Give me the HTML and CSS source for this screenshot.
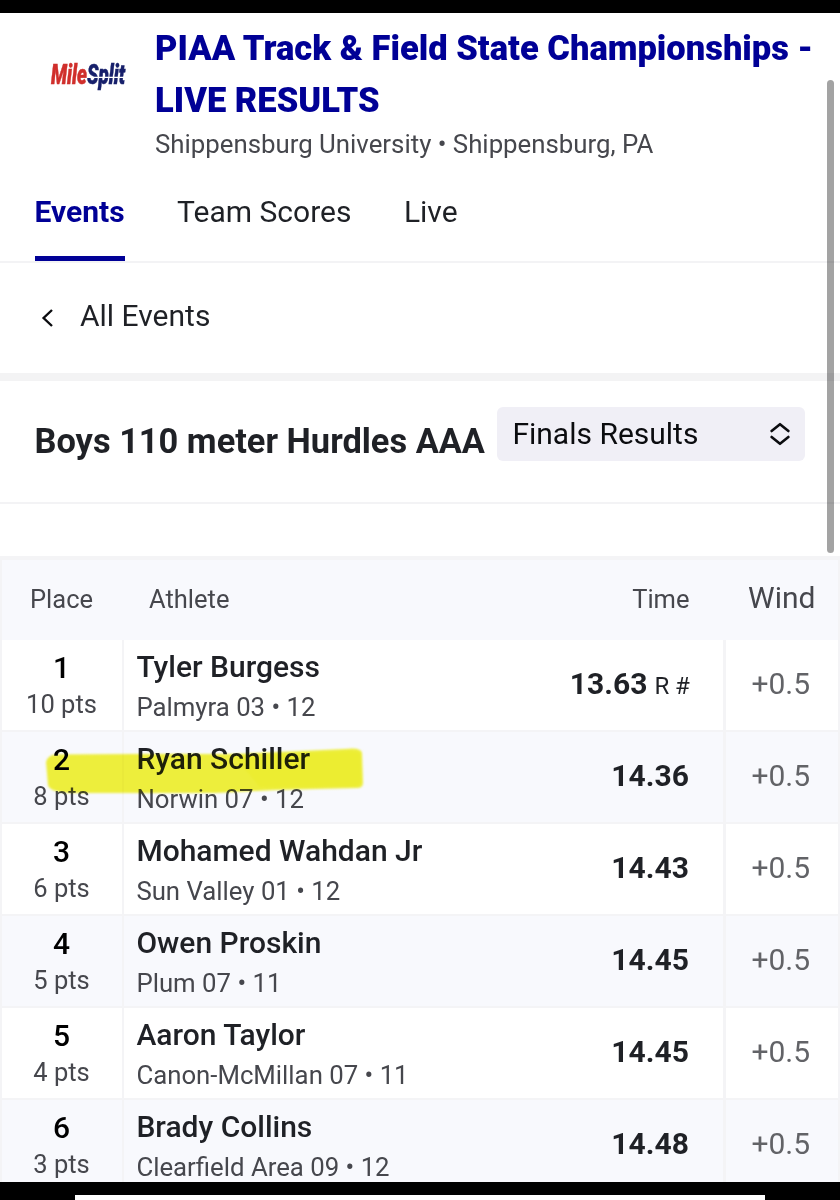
FILE: index.html
```
<!DOCTYPE html>
<html lang="en">
<head>
<meta charset="utf-8">
<title>PIAA Track &amp; Field State Championships - LIVE RESULTS</title>
<link rel="stylesheet" href="styles.css">
</head>
<body>
<div class="screen">
  <header class="meet">
    <svg class="logo" width="80" height="32" viewBox="0 0 80 32">
      <text x="2" y="23" textLength="74" lengthAdjust="spacingAndGlyphs"><tspan class="logo-mile">Mile</tspan><tspan class="logo-split">Split</tspan></text>
      <path d="M38 16.4h38" stroke="#fff" stroke-width="1.1"/>
    </svg>
    <div class="meet-info">
      <h1>PIAA Track &amp; Field State Championships - LIVE RESULTS</h1>
      <p>Shippensburg University • Shippensburg, PA</p>
    </div>
  </header>
  <nav class="tabs">
    <a class="tab active">Events</a>
    <a class="tab">Team Scores</a>
    <a class="tab">Live</a>
  </nav>
  <div class="back">
    <svg width="13" height="20" viewBox="0 0 13 20"><path d="M11 2 2.6 10 11 18" fill="none" stroke="#0b0c0f" stroke-width="2.4"/></svg>
    <span>All Events</span>
  </div>
  <div class="event">
    <h2>Boys 110 meter Hurdles AAA</h2>
    <div class="select">
      <span>Finals Results</span>
      <svg width="22" height="24" viewBox="0 0 22 24"><path d="M2.6 9 11 2.2 19.400 9M2.600 15 11 21.800 19.400 15" fill="none" stroke="#0b0c0f" stroke-width="2.6" stroke-linecap="round" stroke-linejoin="round"/></svg>
    </div>
  </div>
  <div class="results">
    <div class="row head"><div class="place">Place</div><div class="athlete">Athlete</div><div class="time">Time</div><div class="wind">Wind</div></div>
    <div class="row"><div class="place"><b>1</b><span>10 pts</span></div><div class="athlete"><b>Tyler Burgess</b><span>Palmyra 03 • 12</span></div><div class="time"><b>13.63</b><span class="note">R #</span></div><div class="wind">+0.5</div></div>
    <div class="row alt"><div class="place"><b>2</b><span>8 pts</span></div><div class="athlete"><b>Ryan Schiller</b><span>Norwin 07 • 12</span></div><div class="time"><b>14.36</b></div><div class="wind">+0.5</div>
      <svg class="marker" width="322" height="50" viewBox="0 0 322 50"><path d="M1 15Q3 8 10 7.500L90 7 190 7 300 2Q316 0 317 6L318 36Q318 41 312 41L230 43 170 46 30 46Q5 46 3 38Z" fill="#f4f43c"/><path d="M190 10 300 5Q314 4 315 8L316 34Q315 39 308 39L215 40Z" fill="#f2f22c" opacity=".7"/></svg>
    </div>
    <div class="row"><div class="place"><b>3</b><span>6 pts</span></div><div class="athlete"><b>Mohamed Wahdan Jr</b><span>Sun Valley 01 • 12</span></div><div class="time"><b>14.43</b></div><div class="wind">+0.5</div></div>
    <div class="row alt"><div class="place"><b>4</b><span>5 pts</span></div><div class="athlete"><b>Owen Proskin</b><span>Plum 07 • 11</span></div><div class="time"><b>14.45</b></div><div class="wind">+0.5</div></div>
    <div class="row"><div class="place"><b>5</b><span>4 pts</span></div><div class="athlete"><b>Aaron Taylor</b><span>Canon-McMillan 07 • 11</span></div><div class="time"><b>14.45</b></div><div class="wind">+0.5</div></div>
    <div class="row alt"><div class="place"><b>6</b><span>3 pts</span></div><div class="athlete"><b>Brady Collins</b><span>Clearfield Area 09 • 12</span></div><div class="time"><b>14.48</b></div><div class="wind">+0.5</div></div>
  </div>
  <footer class="bottom"><div></div></footer>
  <div class="scrollbar"></div>
</div>
</body>
</html>
```
FILE: styles.css
```
* { box-sizing: border-box; margin: 0; padding: 0; }
body { background: #fff; font-family: Roboto, "Liberation Sans", sans-serif; color: #1f2126; }
.screen { position: relative; width: 840px; height: 1200px; overflow: hidden; display: flex; flex-direction: column; border-top: 13px solid #000; }
svg { display: block; flex: none; }

.meet { height: 181px; flex: none; display: flex; padding: 10px 0 0 49px; }
.logo { margin: 38px 26px 0 0; overflow: visible; }
.logo text { font-weight: 900; font-style: italic; font-size: 27px; }
.logo-mile { fill: #d02f2c; stroke: #d02f2c; stroke-width: .5px; }
.logo-split { fill: #17206b; stroke: #17206b; stroke-width: .5px; }
.meet-info { width: 670px; }
.meet h1 { font-size: 34.5px; line-height: 51.5px; font-weight: 900; color: #000096; }
.meet p { font-size: 25.8px; line-height: 36px; color: #46474d; }

.tabs { height: 69px; flex: none; display: flex; gap: 52.5px; padding-left: 34.5px; border-bottom: 2px solid #f3f3f5; font-size: 30px; line-height: 35px; }
.tab { height: 67px; border-bottom: 5px solid transparent; }
.tab.active { font-weight: 700; color: #000096; border-color: #000096; }

.back { height: 118px; flex: none; display: flex; padding: 35px 0 0 41px; gap: 26px; border-bottom: 8px solid #f3f3f4; font-size: 30px; line-height: 36px; }
.back svg { margin-top: 10px; }

.event { height: 123px; flex: none; display: flex; align-items: flex-start; justify-content: space-between; padding: 26px 34.6px 0 34.5px; border-bottom: 2px solid #f3f3f5; }
.event h2 { font-size: 34.4px; line-height: 40px; font-weight: 700; margin-top: 14px; white-space: nowrap; }
.select { width: 308px; height: 54px; display: flex; align-items: center; justify-content: space-between; padding: 0 14px 0 15px; border-radius: 6px; background: #f0eff6; color: #0b0c0f; font-size: 30px; }
.select span { padding-bottom: 2px; }

.results { height: 626px; flex: none; margin-top: 52px; overflow: hidden; border: solid #f4f4f6; border-width: 4px 2px 0; }
.row { position: relative; height: 92px; display: grid; grid-template-columns: 122px 1fr 160px 112.500px; border-bottom: 2px solid #f4f4f6; }
.row.head { height: 80px; background: #f8f9fd; border: 0; align-items: center; font-size: 25.5px; color: #46474d; }
.row.alt { background: #f8f9fd; }
.row b, .athlete span, .place span { display: block; line-height: 36px; }
.place { text-align: center; padding: 10px 1px 0 0; border-right: 2px solid #f4f4f6; }
.place b { font-size: 30px; font-weight: 500; color: #000; }
.place span { font-size: 25.5px; color: #46474d; }
.athlete span { font-size: 25.75px; color: #46474d; }
.athlete { padding: 9px 0 0 12.4px; white-space: nowrap; }
.athlete b { font-size: 30px; font-weight: 500; }
.athlete span { margin-top: 4px; }
.time { display: flex; justify-content: flex-end; align-items: baseline; padding: 26px 33.6px 0 0; border-right: 3px solid #f4f4f6; white-space: nowrap; }
.time b { font-size: 30px; font-weight: 700; }
.note { font-size: 24px; margin: 0 -1px 0 7px; }
.wind { text-align: center; padding: 26px 2px 0 0; font-size: 30px; line-height: 36px; color: #626367; }
.head > div { padding-top: 0; padding-bottom: 2px; border: 0; }
.head .place { padding-right: 3px; }
.head .athlete { padding-left: 25px; }
.head .time { padding-right: 36px; }
.head .wind { color: #46474d; line-height: 36px; padding: 0 0 4px; }
.marker { position: absolute; left: 43px; top: 15px; mix-blend-mode: multiply; filter: blur(.8px); }

.bottom { height: 18px; flex: none; background: #000; padding: 13px 75px 0; }
.bottom div { height: 5px; background: #fff; }
.scrollbar { position: absolute; left: 827px; top: 67px; width: 7px; height: 473px; border-radius: 4px; background: rgba(0, 0, 0, .36); }
```
